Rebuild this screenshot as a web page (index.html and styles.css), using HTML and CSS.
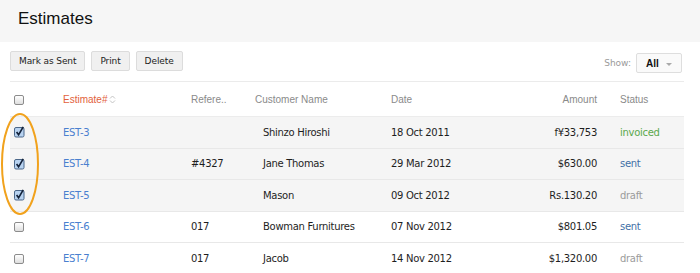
FILE: index.html
```html
<!DOCTYPE html>
<html>
    <head>
        <meta charset="utf-8">
        <title>Estimates</title>
        <link rel="stylesheet" href="styles.css">
    </head>
    <body>
        <div class="page-header">
            <h1>Estimates</h1>
        </div>
        <div class="toolbar">
            <div class="actions">
                <button class="btn">Mark as Sent</button>
                <button class="btn">Print</button>
                <button class="btn">Delete</button>
            </div>
            <div class="filter">
                <span class="filter-label">Show:</span>
                <span class="select">All<span class="caret"></span></span>
            </div>
        </div>
        <div class="list">
            <table class="estimates">
                <colgroup>
                    <col class="c-check">
                    <col class="c-num">
                    <col class="c-ref">
                    <col class="c-cust">
                    <col class="c-date">
                    <col class="c-amt">
                    <col class="c-status">
                </colgroup>
                <thead>
                    <tr>
                        <th><span class="cb"></span></th>
                        <th class="sorted">Estimate#<svg class="sort" width="7" height="9" viewBox="0 0 7 9"><path d="M1 3.5 L3.5 1 L6 3.5 M1 5.5 L3.5 8 L6 5.5" fill="none" stroke="#c4c4c4" stroke-width="1"/></svg></th>
                        <th>Refere..</th>
                        <th>Customer Name</th>
                        <th>Date</th>
                        <th class="amount">Amount</th>
                        <th class="status">Status</th>
                    </tr>
                </thead>
                <tbody>
                    <tr class="selected">
                        <td><svg class="cb-on" width="11" height="12" viewBox="0 0 11 12"><rect x="0.5" y="1.5" width="9.5" height="9.5" rx="1.5" fill="#b7d2f0" stroke="#4b6789"/><path d="M2.6 6 L4.6 8.8 L9.2 0.8" fill="none" stroke="#13223a" stroke-width="1.7"/></svg></td>
                        <td><a class="num">EST-3</a></td>
                        <td></td>
                        <td class="cust">Shinzo Hiroshi</td>
                        <td>18 Oct 2011</td>
                        <td class="amount">f¥33,753</td>
                        <td class="status invoiced">invoiced</td>
                    </tr>
                    <tr class="selected">
                        <td><svg class="cb-on" width="11" height="12" viewBox="0 0 11 12"><rect x="0.5" y="1.5" width="9.5" height="9.5" rx="1.5" fill="#b7d2f0" stroke="#4b6789"/><path d="M2.6 6 L4.6 8.8 L9.2 0.8" fill="none" stroke="#13223a" stroke-width="1.7"/></svg></td>
                        <td><a class="num">EST-4</a></td>
                        <td>#4327</td>
                        <td class="cust">Jane Thomas</td>
                        <td>29 Mar 2012</td>
                        <td class="amount">$630.00</td>
                        <td class="status sent">sent</td>
                    </tr>
                    <tr class="selected">
                        <td><svg class="cb-on" width="11" height="12" viewBox="0 0 11 12"><rect x="0.5" y="1.5" width="9.5" height="9.5" rx="1.5" fill="#b7d2f0" stroke="#4b6789"/><path d="M2.6 6 L4.6 8.8 L9.2 0.8" fill="none" stroke="#13223a" stroke-width="1.7"/></svg></td>
                        <td><a class="num">EST-5</a></td>
                        <td></td>
                        <td class="cust">Mason</td>
                        <td>09 Oct 2012</td>
                        <td class="amount">Rs.130.20</td>
                        <td class="status draft">draft</td>
                    </tr>
                    <tr>
                        <td><span class="cb"></span></td>
                        <td><a class="num">EST-6</a></td>
                        <td>017</td>
                        <td class="cust">Bowman Furnitures</td>
                        <td>07 Nov 2012</td>
                        <td class="amount">$801.05</td>
                        <td class="status sent">sent</td>
                    </tr>
                    <tr>
                        <td><span class="cb"></span></td>
                        <td><a class="num">EST-7</a></td>
                        <td>017</td>
                        <td class="cust">Jacob</td>
                        <td>14 Nov 2012</td>
                        <td class="amount">$1,320.00</td>
                        <td class="status draft">draft</td>
                    </tr>
                </tbody>
            </table>
            <svg class="highlight" width="40" height="106" viewBox="0 0 40 106"><ellipse cx="20" cy="52" rx="18" ry="50" fill="none" stroke="#f1a21d" stroke-width="2"/></svg>
        </div>
    </body>
</html>
```

FILE: styles.css
```css
body{
    margin:0;
    background:#fff;
    font-family:"DejaVu Sans", "Liberation Sans", sans-serif;
    color:#1e1e1e;
}

.page-header{
    background:#f6f6f6;
    height:42px;
    padding:0 18px;
}
.page-header h1{
    margin:0;
    font-family:"Liberation Sans", Arial, sans-serif;
    font-weight:normal;
    font-size:17px;
    line-height:38px;
    color:#111;
}

.toolbar{
    display:flex;
    justify-content:space-between;
    align-items:center;
    padding:9px 18px 0 10px;
    height:20px;
}
.actions{
    display:flex;
    gap:6px;
}
.btn{
    font-family:"DejaVu Sans", sans-serif;
    font-size:9px;
    letter-spacing:-0.1px;
    color:#222;
    background:#f0f0f0;
    border:1px solid #dcdcdc;
    border-radius:2px;
    height:20px;
    padding:0 8px;
}
.filter{
    display:flex;
    align-items:center;
    gap:5px;
    margin-top:4px;
}
.filter-label{
    font-size:9px;
    color:#9a9a9a;
}
.select{
    display:flex;
    align-items:center;
    justify-content:space-between;
    box-sizing:border-box;
    width:46px;
    height:20px;
    padding:0 9px;
    border:1px solid #dedede;
    border-radius:2px;
    background:#fafafa;
    font-family:"Liberation Sans", sans-serif;
    font-weight:bold;
    font-size:10px;
    color:#111;
}
.caret{
    width:0;
    height:0;
    border-left:3px solid transparent;
    border-right:3px solid transparent;
    border-top:3px solid #aaa;
    margin-top:2px;
}

.list{
    position:relative;
    padding:10px 16px 0 10px;
}
.estimates{
    width:674px;
    table-layout:fixed;
    border-collapse:collapse;
    border-top:1px solid #ebebeb;
}
.c-check{width:53px}
.c-num{width:128px}
.c-ref{width:64px}
.c-cust{width:136px}
.c-date{width:130px}
.c-amt{width:76px}
.c-status{width:87px}

.estimates th{
    height:34px;
    padding:0;
    text-align:left;
    font-family:"Liberation Sans", Arial, sans-serif;
    font-weight:normal;
    font-size:10px;
    color:#8a8a8a;
    border-bottom:1px solid #ececec;
}
.estimates th.sorted{
    color:#e2613c;
}
.sort{
    margin-left:2px;
    vertical-align:-1px;
}
.estimates td{
    height:30.5px;
    padding:0;
    font-size:10px;
    letter-spacing:-0.3px;
    color:#1e1e1e;
    border-bottom:1px solid #e8e8e8;
    white-space:nowrap;
}
.estimates tr.selected td{
    background:#f5f5f5;
}
.estimates th:first-child,
.estimates td:first-child{
    padding-left:4px;
}
.estimates .cust{
    padding-left:8px;
}
.estimates .amount{
    text-align:right;
}
.estimates .status{
    padding-left:23px;
}
.num{
    color:#4a7fcf;
}
.invoiced{color:#5aa84c !important}
.sent{color:#3f6fa6 !important}
.draft{color:#9b9b9b !important}

.cb{
    display:inline-block;
    vertical-align:middle;
    width:8px;
    height:8px;
    border:1px solid #8c8c8c;
    border-radius:2px;
    background:linear-gradient(#fff,#dedede);
}
.cb-on{
    display:inline-block;
    vertical-align:middle;
}

.highlight{
    position:absolute;
    left:0;
    top:41px;
}
```
